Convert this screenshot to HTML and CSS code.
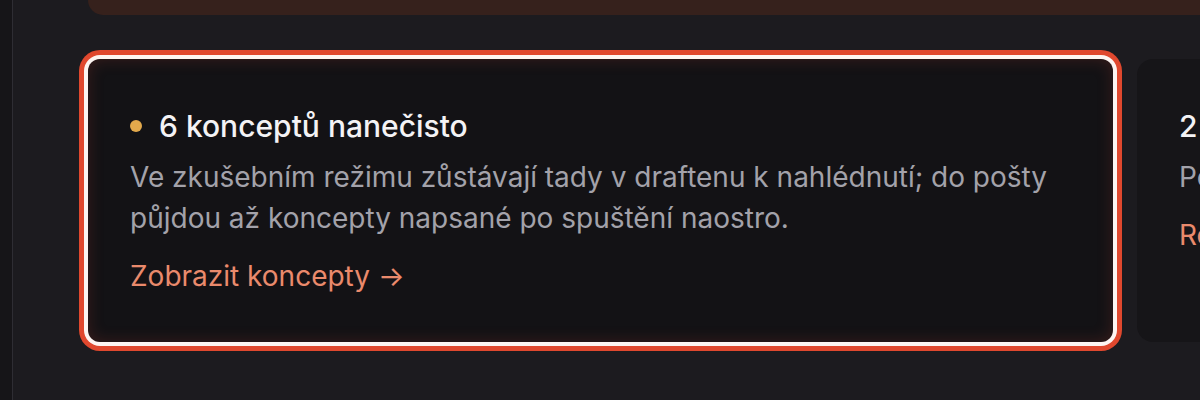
FILE: index.html
```html
<!DOCTYPE html>
<html lang="cs">
<head>
<meta charset="utf-8">
<title>Koncepty</title>
<link rel="stylesheet" href="styles.css">
</head>
<body>
<div class="layout">
  <aside class="sidebar"></aside>
  <main class="main">
    <div class="banner"></div>
    <div class="cards">
      <section class="card card--focus">
        <h2 class="card-title"><span class="dot"></span>6 konceptů nanečisto</h2>
        <p class="card-text">Ve zkušebním režimu zůstávají tady v draftenu k nahlédnutí; do pošty půjdou až koncepty napsané po spuštění naostro.</p>
        <a class="card-link" href="#">Zobrazit koncepty →</a>
      </section>
      <section class="card">
        <h2 class="card-title">2 koncepty čekají</h2>
        <p class="card-text">Potvrď je, aby se mohly odeslat.</p>
        <a class="card-link" href="#">Rozhodnout →</a>
      </section>
    </div>
  </main>
</div>
</body>
</html>
```

FILE: styles.css
```css
html, body {
  margin: 0;
  padding: 0;
  height: 100%;
  overflow: hidden;
  background: #1c1b1f;
  font-family: "Inter", "Noto Sans", sans-serif;
}

.layout {
  display: flex;
  height: 400px;
}

.sidebar {
  width: 12px;
  flex-shrink: 0;
  background: #161518;
  border-right: 1px solid #2e2d33;
}

.main {
  flex: 1;
  padding-left: 75px;
  min-width: 0;
}

.banner {
  height: 15px;
  background: #36211c;
  border-radius: 0 0 0 18px;
  margin-bottom: 44px;
}

.cards {
  display: flex;
  gap: 24px;
}

.card {
  flex-shrink: 0;
  width: 1025px;
  box-sizing: border-box;
  height: 283px;
  padding: 49px 30px 0 42px;
  background: #161518;
  border-radius: 16px;
}

.card--focus {
  background: #131215;
  border-radius: 12px;
  box-shadow:
    inset 0 0 16px rgba(200, 70, 50, 0.22),
    0 0 0 4px #fdf5f2,
    0 0 0 9px #e0482e;
}

.card-title {
  display: flex;
  align-items: center;
  margin: 0;
  font-size: 30px;
  line-height: 36px;
  font-weight: 500;
  color: #f4f3f5;
}

.dot {
  width: 12px;
  height: 12px;
  border-radius: 50%;
  background: #e2a94c;
  margin-right: 17px;
  flex-shrink: 0;
}

.card-text {
  margin: 13px 0 0;
  font-size: 28px;
  line-height: 41px;
  color: #a3a2aa;
}

.card-link {
  display: inline-block;
  margin-top: 17px;
  font-size: 28px;
  line-height: 41px;
  color: #ea8a6c;
  text-decoration: none;
}
```
